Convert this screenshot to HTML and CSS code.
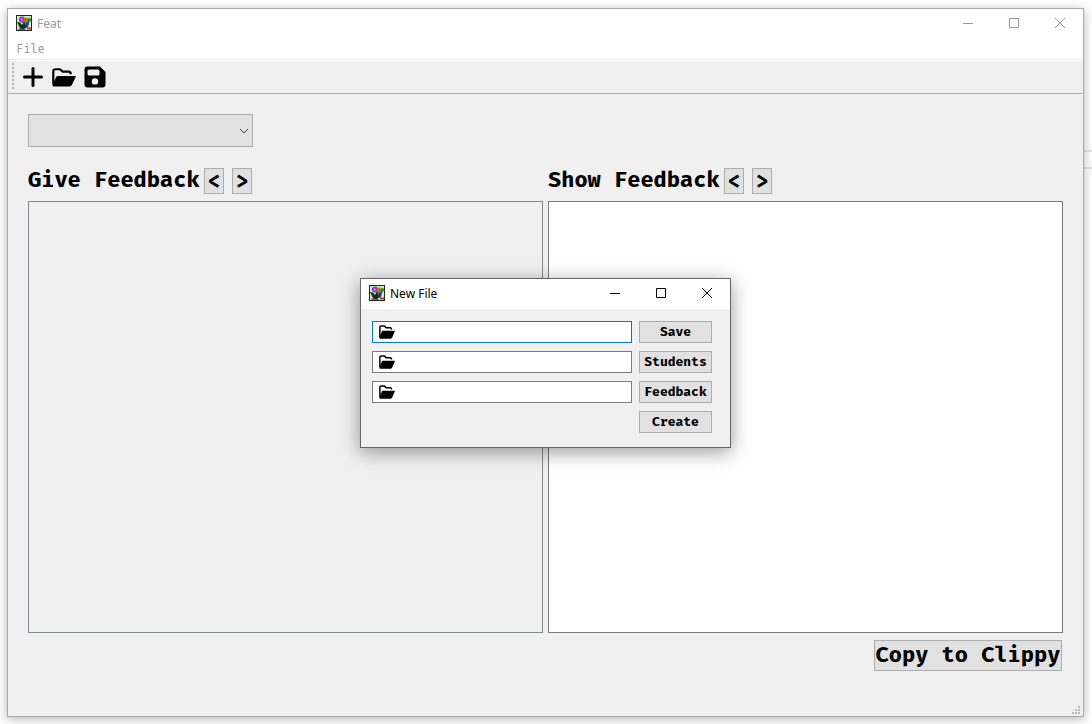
FILE: index.html
```html
<!DOCTYPE html>
<html lang="en">
<head>
<meta charset="utf-8">
<title>Feat</title>
<link rel="stylesheet" href="styles.css">
</head>
<body>
<svg class="defs" aria-hidden="true">
  <symbol id="folder" viewBox="0 0 24 20" preserveAspectRatio="none">
    <path d="M1.300 17V3.500Q1.300 1.300 3.500 1.300H8L10.500 3.800H16.500Q18.800 3.800 18.800 6.500" fill="none" stroke="currentColor" stroke-width="2.200" stroke-linejoin="round"/>
    <path d="M5.600 8.300H23.200Q24 8.500 23.700 9.400L19.800 18Q19 19.500 17.600 19.500H2Q0 19.500 .6 17.500L4.300 9.200Q4.700 8.300 5.600 8.300Z" fill="currentColor"/>
  </symbol>
  <symbol id="logo" viewBox="0 0 16 16">
    <path d="M0 0H16V16H0Z" fill="#1d2c20"/>
    <path d="M1 1H15V15H1Z" fill="#c4efc0"/>
    <path d="M2 15Q3 12 6 12.500T10 15Z" fill="#a33cc4"/>
    <path d="M3 3Q4 1 7 1.500Q9.500 2 8.500 6L6 8L3 6Z" fill="#9c35d0"/>
    <path d="M5 3.500H6.500V5.500H5Z" fill="#d8a8e4"/>
    <path d="M8 3.500Q11.500 1 12 5L9.500 9.500H7Z" fill="#b8700f"/>
    <path d="M11 5L13 2.500L15 4V6L12 8Z" fill="#3c8a16"/>
    <path d="M10 7.500L13.500 6L12 12L8 14Z" fill="#2438a8"/>
    <path d="M1 7L4 7.500L6 10L8 6.500L9 9L10 12L7 14.500L4 13Z" fill="#12330f"/>
    <path d="M11 13.500H15" stroke="#d82828" stroke-width="2"/>
  </symbol>
  <symbol id="minimize" viewBox="0 0 12 12"><path d="M1 6.500H11" stroke="currentColor"/></symbol>
  <symbol id="maximize" viewBox="0 0 12 12"><path d="M1.500 1.500H10.500V10.500H1.500Z" fill="none" stroke="currentColor"/></symbol>
  <symbol id="close" viewBox="0 0 12 12"><path d="M1 1L11 11M11 1L1 11" stroke="currentColor"/></symbol>
</svg>

<div class="backdrop"></div>

<main class="window">
  <header class="titlebar">
    <svg class="logo"><use href="#logo"/></svg>
    <span class="caption">Feat</span>
    <button class="control" aria-label="Minimize"><svg><use href="#minimize"/></svg></button>
    <button class="control" aria-label="Maximize"><svg><use href="#maximize"/></svg></button>
    <button class="control" aria-label="Close"><svg><use href="#close"/></svg></button>
  </header>
  <nav class="menubar"><button class="menu">File</button></nav>
  <div class="toolbar">
    <span class="handle"></span>
    <button class="tool" aria-label="New"><svg viewBox="0 0 24 24"><path d="M12 3.500V20.500M3.500 12H20.500" stroke="currentColor" stroke-width="3" stroke-linecap="round"/></svg></button>
    <button class="tool" aria-label="Open"><svg class="open"><use href="#folder"/></svg></button>
    <button class="tool" aria-label="Save"><svg viewBox="0 0 24 24"><path fill-rule="evenodd" fill="currentColor" d="M4.500 1.500H17L22.500 7V19.500Q22.500 22.500 19.500 22.500H4.500Q1.500 22.500 1.500 19.500V4.500Q1.500 1.500 4.500 1.500ZM6 4.500Q4.500 4.500 4.500 6V9Q4.500 10.500 6 10.500H15Q16.500 10.500 16.500 9V6Q16.500 4.500 15 4.500ZM12 13.200A3.200 3.200 0 1 0 12 19.600A3.200 3.200 0 1 0 12 13.200Z"/></svg></button>
  </div>
  <div class="content">
    <span class="picker">
      <select class="combo" aria-label="Student"><option></option></select>
      <svg class="chevron" viewBox="0 0 10 6"><path d="M1 1L5 5L9 1" fill="none" stroke="currentColor"/></svg>
    </span>
    <div class="columns">
      <section class="column">
        <div class="heading">
          <h2>Give Feedback</h2>
          <button class="step" aria-label="Previous">&lt;</button>
          <button class="step" aria-label="Next">&gt;</button>
        </div>
        <div class="panel"></div>
      </section>
      <section class="column">
        <div class="heading">
          <h2 id="show">Show Feedback</h2>
          <button class="step" aria-label="Previous">&lt;</button>
          <button class="step" aria-label="Next">&gt;</button>
        </div>
        <textarea class="panel editor" aria-labelledby="show"></textarea>
      </section>
    </div>
    <button class="copy">Copy to Clippy</button>
  </div>
  <svg class="grip" viewBox="0 0 8 8"><path fill="#b8b8b8" d="M6 0h2v2h-2zM3 3h2v2h-2zM6 3h2v2h-2zM0 6h2v2h-2zM3 6h2v2h-2zM6 6h2v2h-2z"/></svg>
</main>

<div class="dialog" role="dialog" aria-labelledby="dialog-title">
  <header class="titlebar">
    <svg class="logo"><use href="#logo"/></svg>
    <span class="caption" id="dialog-title">New File</span>
    <button class="control" aria-label="Minimize"><svg><use href="#minimize"/></svg></button>
    <button class="control" aria-label="Maximize"><svg><use href="#maximize"/></svg></button>
    <button class="control" aria-label="Close"><svg><use href="#close"/></svg></button>
  </header>
  <form class="form">
    <label class="field active"><svg><use href="#folder"/></svg><input type="text" aria-label="Save path"></label>
    <button class="action" type="button">Save</button>
    <label class="field"><svg><use href="#folder"/></svg><input type="text" aria-label="Students path"></label>
    <button class="action" type="button">Students</button>
    <label class="field"><svg><use href="#folder"/></svg><input type="text" aria-label="Feedback path"></label>
    <button class="action" type="button">Feedback</button>
    <button class="action create" type="button">Create</button>
  </form>
</div>
</body>
</html>
```
FILE: styles.css
```css
* { box-sizing: border-box; }

body {
  margin: 0;
  height: 100vh;
  padding: 8px 8px 7px 7px;
  background: #fff;
  color: #000;
  font-family: "Fira Mono", "DejaVu Sans Mono", monospace;
  overflow: hidden;
}

button, input, select, textarea {
  margin: 0;
  padding: 0;
  border: 0;
  border-radius: 0;
  color: inherit;
  font: inherit;
  outline: 0;
}

button { background: none; }
svg { display: block; }
.defs { position: absolute; width: 0; height: 0; }

/* Edge of the page behind the window */
.backdrop {
  position: absolute;
  top: 150px;
  right: 0;
  width: 16px;
  height: 19px;
  border: solid #e6e6e6;
  border-width: 2px 0;
}

.window {
  position: relative;
  display: flex;
  flex-direction: column;
  height: 100%;
  border: 1px solid #aaa;
  background: #f0f0f0;
  box-shadow: 0 2px 10px rgba(0, 0, 0, 0.3);
}

.titlebar {
  display: flex;
  align-items: center;
  height: 30px;
  padding: 0 0 2px 8px;
  background: #fff;
  color: #000;
  font: 12px/16px "Segoe UI", "Noto Sans", sans-serif;
}

.window > .titlebar { height: 28px; padding-bottom: 0; color: #999; }
.logo { width: 16px; height: 16px; }
.caption { flex: 1; padding: 1px 0 0 5px; }

.control {
  display: flex;
  align-items: center;
  justify-content: center;
  width: 46px;
  height: 28px;
}
.control svg { width: 12px; height: 12px; }

.menubar {
  height: 24px;
  padding-left: 8px;
  border-bottom: 1px solid #ececec;
  background: #fff;
}
.window > .menubar { height: 23px; }
.menu { height: 23px; color: #999; font-size: 12px; }

.toolbar {
  display: flex;
  align-items: center;
  gap: 7px;
  height: 34px;
  padding-left: 4px;
  border-top: 1px solid #fff;
  border-bottom: 1px solid #b0b0b0;
}
.handle {
  width: 2px;
  height: 28px;
  background: repeating-linear-gradient(#b4b4b4 0 2px, #f0f0f0 2px 4px);
}
.tool { width: 24px; height: 24px; display: grid; place-items: center; }
.tool svg { width: 24px; height: 24px; }
.tool .open { height: 19px; }

.content {
  flex: 1;
  display: flex;
  flex-direction: column;
  align-items: flex-start;
  padding: 20px 20px 45px;
}

.picker { display: grid; width: 225px; height: 33px; align-items: center; }
.picker > * { grid-area: 1 / 1; }
.combo {
  width: 100%;
  height: 100%;
  border: 1px solid #adadad;
  background: #e1e1e1;
  appearance: none;
}
.chevron { justify-self: end; width: 10px; height: 6px; margin-right: 4px; color: #444; pointer-events: none; }

.columns {
  flex: 1;
  display: grid;
  grid-template-columns: 1fr 1fr;
  gap: 5px;
  width: 100%;
  padding-top: 19px;
}
.column { display: flex; flex-direction: column; min-width: 0; }
.heading { display: flex; align-items: flex-end; gap: 8px; height: 28px; }
h2 { margin: 0; width: 168px; font-size: 22px; line-height: 28px; white-space: nowrap; }

.step, .copy, .action {
  border: 1px solid #adadad;
  background: #e1e1e1;
  font-weight: bold;
  text-align: center;
  white-space: nowrap;
}
.step { width: 20px; height: 26px; font-size: 22px; line-height: 24px; }

.panel { flex: 1; margin-top: 7px; border: 1px solid #828790; }
.editor { width: 100%; border-color: #7a7a7a; background: #fff; resize: none; }

.copy {
  align-self: flex-end;
  min-width: 188px;
  height: 31px;
  margin: 7px 1px 0 0;
  padding-bottom: 2px;
  font-size: 22px;
  line-height: 26px;
}

.grip { position: absolute; right: 3px; bottom: 2px; width: 8px; height: 8px; }

/* Floating window */
.dialog {
  position: absolute;
  top: 278px;
  left: 360px;
  width: 371px;
  border: 1px solid #666;
  background: #f0f0f0;
  box-shadow: 0 4px 18px rgba(0, 0, 0, 0.4);
}

.form {
  display: grid;
  grid-template-columns: 1fr 73px;
  gap: 8px 7px;
  padding: 12px 18px 14px 11px;
}
.field {
  display: flex;
  align-items: center;
  gap: 4px;
  height: 22px;
  padding: 0 6px;
  border: 1px solid #7a7a7a;
  background: #fff;
}
.field.active { border-color: #0078d7; }
.field svg { width: 16px; height: 14px; }
.field input { flex: 1; min-width: 0; background: none; font-size: 13px; }
.action { height: 22px; font-size: 13px; line-height: 18px; }
.create { grid-column: 2; }
```
